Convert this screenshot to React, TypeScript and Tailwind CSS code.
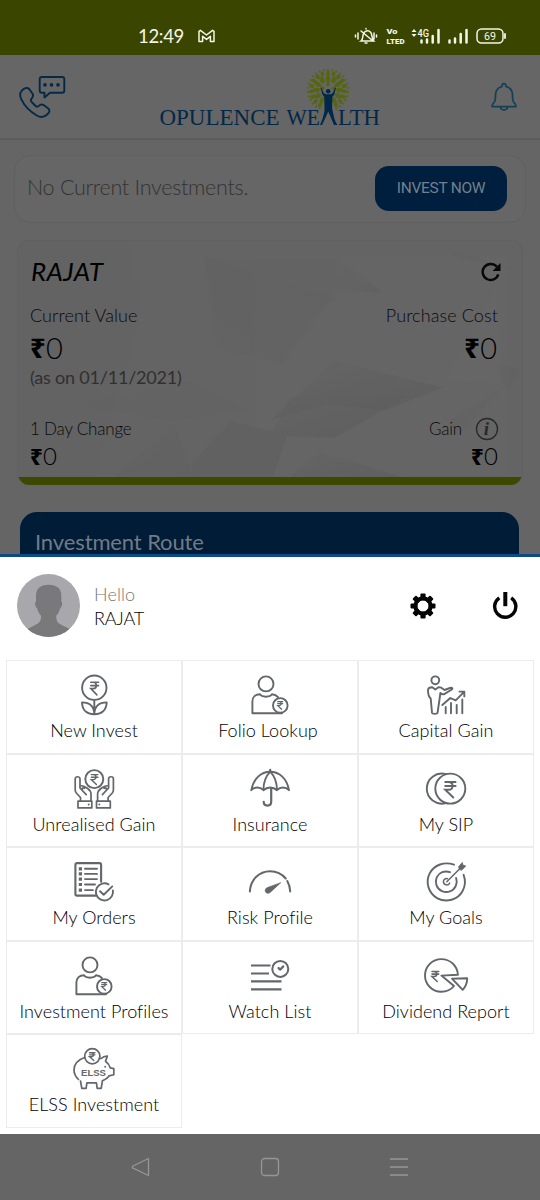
import React from "react";

const lato = "font-['Lato','Noto_Sans',sans-serif]";

function Rupee({ x, y, w, h, sw = 1.4 }: { x: number; y: number; w: number; h: number; sw?: number }) {
  return (
    <path
      d={`M${x} ${y}h${w}M${x} ${y + h * 0.26}h${w}M${x} ${y}h${w * 0.3}c${w * 0.55} 0 ${w * 0.55} ${h * 0.5} 0 ${h * 0.5}h${-w * 0.3}l${w * 0.78} ${h * 0.5}`}
      strokeWidth={sw}
      strokeLinejoin="miter"
    />
  );
}

function IconFrame({ children }: { children: React.ReactNode }) {
  return (
    <svg viewBox="0 0 48 44" className="h-11 w-12 shrink-0" fill="none" stroke="#63666a" strokeWidth="1.9" strokeLinecap="round" strokeLinejoin="round">
      {children}
    </svg>
  );
}

const flower = (
  <>
    <circle cx="24.3" cy="14.7" r="12.2" />
    <Rupee x={20.8} y={9.3} w={7.8} h={12.6} sw={1.6} />
    <path d="M24.3 27v14M24.3 41.2C16 41.2 12.2 36 12 29.4c7.6 0 12 4 12.3 11.8M24.3 41.2C32.6 41.2 36.4 36 36.7 29.4c-7.7 0-12.1 4-12.4 11.8" />
  </>
);

const person = (
  <>
    <circle cx="20" cy="10.9" r="7.5" />
    <path d="M28 40.3H6.4V28.5c0-4.5 3.2-7.2 7.6-7.3 1.5 3.3 10.5 3.3 12 0 2.6.2 4.6 1.2 6 3M27 40.3h9" />
    <circle cx="34.3" cy="32.4" r="7.3" />
    <Rupee x={31.7} y={28.7} w={5} h={7.6} sw={1.2} />
  </>
);

const growth = (
  <>
    <circle cx="13.3" cy="7.3" r="3.9" />
    <path d="M10.3 14.2c-2.3 0-4.3.6-4.3 3 0 3.5.4 6.3 2.7 8.3l1.3 14.200c.2 1.500 5.400 1.500 5.600 0L18.400 20c1.600 1.500 2.600 1.700 4.200.8l6.800-4c2-1.400.7-2.500-1.400-1.800L22.500 17l-3.200-2.200c-1-.7-2-.6-2.800-.6l-3.200 2.300z" />
    <path d="M20.3 32l8-7 5.4 2.4 8.4-8.6M37.5 18.600h4.800v4.800M23.700 34v6.300M29 30v10.300M34.700 32v8.300M40.300 26.500v13.800" />
  </>
);

const hands = (
  <>
    <circle cx="24.3" cy="12.1" r="9" />
    <Rupee x={21.3} y={7.6} w={6.6} h={10} sw={1.4} />
    <path d="M10.5 34v-3.5L6.3 26c-.8-1-1.1-1.8-1.1-3V12c0-3 4.8-3 4.8 0v9l6.2 6.7M10 18.5c5 0 11 4.5 11 8.500v7M12.500 23.300c-1.500-1.700.5-3.200 2-2M38.100 34v-3.500l4.200-4.500c.8-1 1.100-1.800 1.100-3V12c0-3-4.800-3-4.800 0v9l-6.200 6.700M38.600 18.500c-5 0-11 4.500-11 8.500v7M36.100 23.300c1.500-1.700-.5-3.200-2-2" strokeWidth="1.7" />
    <path d="M8 34.200h13.800v6.700H8zM26.500 34.200h13.800v6.700H26.500z" strokeWidth="1.7" />
    <path d="M18.700 37.500v.1M29.300 37.500v.1" />
  </>
);

const umbrella = (
  <>
    <path d="M5.3 23.2C7.5 11.5 15 4.700 24.200 4.700S41 11.500 43 23.200c-3.600-3.700-8.600-3.700-12 0-4-3.700-9.600-3.700-13.600 0-3.400-3.700-8.600-3.700-12.100 0zM24.200 4.700C20 9 17.500 16 17.400 23M24.200 4.700C28.400 9 30.900 16 31 23" />
    <path d="M24.2 2.8v1.9M25.2 21v13.8c0 5-7.5 5-7.5 0" strokeWidth="2.2" />
  </>
);

const coins = (
  <>
    <circle cx="28.3" cy="21.6" r="15" />
    <path d="M24 7.2C14 4.3 4.8 11.800 4.800 21.600S14 38.900 24 36" />
    <Rupee x={23.2} y={15} w={10.4} h={15.5} sw={1.9} />
  </>
);

const orders = (
  <>
    <path d="M26 35.600H7c-1 0-1.600-.6-1.600-1.600V4.700c0-1 .6-1.600 1.600-1.600h22.500c1 0 1.600.6 1.600 1.600v17" strokeWidth="2.1" />
    <path d="M15 8.800h12M15 13.900h12M15 19.100h12M15 24.500h10M15 30.100h8" />
    <path d="M8.800 8.800h3.200M8.800 13.900h3.200M8.800 19.100h3.200M8.800 24.500h3.200M8.800 30.100h3.200" strokeWidth="3.200" strokeLinecap="butt" />
    <path d="M38.500 24.300c-4-2.200-9.300-.6-11.600 3.500-2.300 4.200-.7 9.400 3.500 11.600s9.400.7 11.600-3.500c1-1.800 1.200-3.700.9-5.500M30 31.300l3.700 3.400 8.600-8.300" />
  </>
);

const gauge = (
  <>
    <path d="M3.900 31.500C4.300 20 13 11.200 24.200 11.200c7 0 12 3 15.500 7.300M41.300 21c1.800 3.200 2.800 6.700 2.900 10.500" strokeWidth="2" />
    <path d="M34.500 22.900L24 32.600c-1.700 1.300-4 .8-4.600-1-.6-1.900.2-3.300 2-4z" fill="#63666a" stroke="#63666a" strokeWidth=".7" />
  </>
);

const target = (
  <>
    <path d="M32 4.700C22.500 1.200 12.200 4.800 7.700 13.400c-4.600 9-1.100 20 7.700 24.900 9 4.800 20.400 1.600 25.200-7.300 2.800-5.200 3-11 1-16.200" />
    <path d="M28 12.200c-5.300-2-11 .2-13.300 5.200-2.300 5.300 0 11.400 5.300 13.700 5.300 2.400 11.500 0 13.800-5.200 1.200-2.600 1.200-5.500.3-8" />
    <path d="M25.500 18.800c-2-.8-4 .6-4.100 2.800 0 3.700 5 4.500 6.200 1.300M24.800 21.700L39 7.500" strokeWidth="1.5" />
    <path d="M37.400 9.200l-.8-2.500 3.700-4.200.7 2.700 2.800.8-4 4z" fill="#63666a" strokeWidth=".8" />
  </>
);

const list = (
  <>
    <path d="M5 11.500h19.500M5 19.500h18M5 27.300h30.500M5 35.300h30.500" strokeWidth="2.2" strokeLinecap="butt" />
    <circle cx="34.3" cy="14.9" r="8" strokeWidth="2" />
    <path d="M32.600 14.100l1.700 1.500 2.900-3.200" strokeWidth="2.3" />
  </>
);

const pie = (
  <>
    <path d="M35.900 20.700c-.5-9-7.800-15.600-16.500-15.600C10.300 5.100 3 12.400 3 21.400s7.300 16.400 16.300 16.400c5.200 0 9.700-2.100 12.700-5.800L19.400 21.600z" />
    <path d="M30 24.600l15.200-.3c0 4.700-1.500 8.400-4.500 11.500z" />
    <Rupee x={10} y={17.5} w={6.7} h={10} sw={1.6} />
  </>
);

const piggy = (
  <>
    <circle cx="22.3" cy="9.3" r="7.6" strokeWidth="1.7" />
    <Rupee x={19.5} y={5.8} w={5.5} h={7.8} sw={1.4} />
    <path d="M14.500 10.500C8 12.800 4 17.300 4 23c0 4.200 1.800 7 4.500 9.500M10.500 34l1.300 7.300h4.300l.8-5.400h9.500l.8 5.400h4l1.300-7.800c3.200-1.200 5.300-2.400 6.500-4.600l4.800-1.200v-6l-3.500-.8c-1-2.700-2.500-5-4.800-6.600l1.800-5.200c-3-.1-4.600.8-6 2.400h-2" strokeDasharray="46 1.5" strokeWidth="1.7" />
    <path d="M35.200 19.700v.1" />
    <text x="11" y="29" fontFamily="Liberation Sans, sans-serif" fontWeight="700" fontSize="9.600" textLength="25" lengthAdjust="spacingAndGlyphs" fill="#63666a" stroke="none">ELSS</text>
  </>
);

const items: { label: string; icon: React.ReactNode; nudge?: string }[] = [
  { label: "New Invest", icon: flower },
  { label: "Folio Lookup", icon: person, nudge: "pr-1" },
  { label: "Capital Gain", icon: growth },
  { label: "Unrealised Gain", icon: hands },
  { label: "Insurance", icon: umbrella },
  { label: "My SIP", icon: coins },
  { label: "My Orders", icon: orders },
  { label: "Risk Profile", icon: gauge },
  { label: "My Goals", icon: target },
  { label: "Investment Profiles", icon: person },
  { label: "Watch List", icon: list },
  { label: "Dividend Report", icon: pie },
  { label: "ELSS Investment", icon: piggy },
];

function StatusBar() {
  return (
    <div className="flex h-[55px] shrink-0 items-center bg-[#3a4500] pt-[17px] text-[#f4f6e8]">
      <span className="ml-[138px] w-[60px] text-[18.5px] leading-none tracking-[-0.3px]">12:49</span>
      <svg viewBox="0 0 17 14" className="h-3.5 w-[17px]" fill="none" stroke="#f4f6e8" strokeWidth="1.5" strokeLinejoin="round">
        <path d="M1 12.500V2.300l1.400-1L8.500 6l6.100-4.700 1.400 1v10.200h-3.600V7.300L8.500 10.400 4.600 7.300v5.200z" />
      </svg>
      <svg viewBox="354 26 154 20" className="ml-[139px] h-5 w-[154px]" fill="none" stroke="#f4f6e8" strokeWidth="1.5" strokeLinecap="round">
        <path d="M355.500 35v2M358 33v6M376.500 35v2M374 33v6M361 41c2-1.500 1.600-4 2.200-6.500.8-3.500 5-5 7.600-2 1.800 2.400.5 6 3 8.500zM361 31l12 10M366 29v-.5M365 43h2" />
        <g fill="#f4f6e8" stroke="none" fontFamily="Roboto, sans-serif">
          <text x="386.500" y="34.300" fontSize="7" fontWeight="900" textLength="11" lengthAdjust="spacingAndGlyphs">Vo</text>
          <text x="386.500" y="43.800" fontSize="7.500" fontWeight="900" textLength="18" lengthAdjust="spacingAndGlyphs">LTED</text>
          <text x="417.500" y="36.500" fontSize="10.500" fontWeight="500" textLength="11.500" lengthAdjust="spacingAndGlyphs">4G</text>
          <text x="484" y="39.800" fontSize="11" textLength="12" lengthAdjust="spacingAndGlyphs">69</text>
          <path d="M411.500 32l2.500-3 2.500 3zM411.500 34l2.500 3 2.500-3z" />
        </g>
        <path d="M421.500 40.500v2M427 39.500v3M432.700 36v6.500M438.500 30v12.500M449.500 40.500v2M455 38.500v4M460.700 34v8.500M466.500 30v12.500" strokeWidth="2.500" />
        <rect x="477" y="29" width="26" height="14" rx="4.500" strokeWidth="1.500" />
        <path d="M505 34v4" strokeWidth="1.800" />
      </svg>
    </div>
  );
}

const leaves = [
  { r: 20.3, n: 30, rx: 0.9, ry: 1.2, gap: 24 },
  { r: 16.8, n: 19, rx: 1.9, ry: 2.6, gap: 20 },
  { r: 11.6, n: 12, rx: 2.3, ry: 3.5, gap: 28 },
  { r: 6, n: 5, rx: 1.7, ry: 2.3, gap: 80 },
];

function Logo() {
  return (
    <svg viewBox="158 66 224 64" className="h-16 w-56">
      <g fill="#566510">
        {leaves.map((ring) =>
          Array.from({ length: ring.n }, (_, i) => {
            const a = (i * 360) / ring.n;
            if (Math.abs(a - 180) < ring.gap) return null;
            return <ellipse key={`${ring.r}-${i}`} cx="328" cy={90 - ring.r} rx={ring.rx} ry={ring.ry} transform={`rotate(${a} 328 90)`} />;
          })
        )}
      </g>
      <g fill="#022849">
        <circle cx="328.2" cy="91.3" r="2.3" />
        <path d="M321.200 87.500l2.400 5.200c1 1.200 2 1.600 4.600 1.600s3.600-.4 4.600-1.600l2.400-5.200.7.500-1.600 6.500-2 2.500-.2 11.500 2.200 10c1.300 3.500 2 5 3.200 6.500h-3.500c-2.200-5.500-4-9.500-5.800-13.500-1.700 4-3.600 8-6.200 13.500h-2c2-4 3.500-9 4.500-14l-.2-14-1.900-2.500-1.800-6.500z" />
        <g fontFamily="Liberation Serif, serif" fontSize="23.500">
          <text x="159.500" y="125.300" textLength="120" lengthAdjust="spacingAndGlyphs">OPULENCE</text>
          <text x="286.500" y="125.300" textLength="33.500" lengthAdjust="spacingAndGlyphs">WE</text>
          <text x="338" y="125.300" textLength="42" lengthAdjust="spacingAndGlyphs">LTH</text>
        </g>
      </g>
    </svg>
  );
}

function Header() {
  return (
    <header className="flex h-[85px] shrink-0 items-start border-b-2 border-[#5c5c5c] bg-[#666]">
      <svg viewBox="18 74 50 46" className="ml-[18px] mt-[19px] h-[46px] w-[50px]" fill="none" stroke="#052a48" strokeWidth="1.9" strokeLinejoin="round">
        <path d="M42 77h20c1.500 0 2.300.8 2.300 2.300v11.200c0 1.500-.8 2.300-2.300 2.300h-12l-5.500 4.700v-4.700H42c-1.500 0-2.300-.8-2.300-2.300V79.300c0-1.500.8-2.300 2.300-2.300z" />
        <path d="M45 84.800v.1M51.500 84.800v.1M58 84.800v.1" strokeWidth="3.600" strokeLinecap="round" />
        <path d="M21.500 91c2.500-2.800 5.500-4 7.700-2l3.200 4.500c1.500 2.300.5 3.800-1 5.300-.8 1-.7 2 .2 3.200l4 4c1.200 1 2.200.8 3.200-.1 1.500-1.500 3-2 5.200-.6l4 3c2.300 1.900 1.700 3.600-.4 5.700-3.200 3.600-6.500 3.900-10.800 1.500C30 111.500 24.500 106 21.500 99.700c-1.800-3.500-2-6.200 0-8.700z" />
      </svg>
      <div className="ml-[90px] mt-[11px]"><Logo /></div>
      <svg viewBox="490 81 28 32" className="ml-[108px] mt-[26px] h-8 w-7" fill="none" stroke="#133f57" strokeWidth="1.7" strokeLinejoin="round">
        <path d="M502 86.500c0-3.800 4-3.800 4 0 4.200 1.200 6.500 4 6.500 8.500 0 5 .3 6.500 1.500 7.600 1.600 1.200 2 2.100 2 4h-24c0-1.900.4-2.800 2-4 1.200-1.100 1.500-2.600 1.500-7.600 0-4.500 2.300-7.300 6.500-8.500zM500.500 107c.4 4 6.600 4 7 0" />
      </svg>
    </header>
  );
}

function Facets() {
  return (
    <svg viewBox="18 240 504 238" preserveAspectRatio="none" className="absolute inset-0 h-full w-full opacity-60">
      <defs>
        <linearGradient id="fa" x1="0" x2="1" y1="0" y2="1">
          <stop offset="0" stopColor="#5c5c5c" stopOpacity=".1" />
          <stop offset="1" stopColor="#575757" stopOpacity=".8" />
        </linearGradient>
        <linearGradient id="fb" x1="1" x2="0" y1="0" y2="1">
          <stop offset="0" stopColor="#5c5c5c" stopOpacity=".5" />
          <stop offset="1" stopColor="#646464" stopOpacity=".1" />
        </linearGradient>
      </defs>
      <path d="M18 240h108l17 65-50 173H18z" fill="#626262" fillOpacity=".5" />
      <path d="M205 255l60 20 72 20-60 50-55 10z" fill="url(#fb)" />
      <path d="M203 256l134 0 0 32-55 72-65-15z" fill="#606060" fillOpacity=".3" />
      <path d="M338 256l45 35-46-3z" fill="url(#fa)" opacity=".5" />
      <path d="M334 357l109 26-58 22-60-5-55 15z" fill="url(#fa)" />
      <path d="M410 390l-75 42-65-2 20-38z" fill="url(#fa)" />
      <path d="M80 400l110-24 60 28-80 12z" fill="#616161" fillOpacity=".5" />
      <path d="M191 458l40-42 56 14-17 48h-75z" fill="#5d5d5d" fillOpacity=".7" />
      <path d="M104 478l70-62 22 62z" fill="url(#fa)" opacity=".5" />
      <path d="M320 446l110 32h-150z" fill="url(#fa)" />
      <path d="M454 250l68 20-70-15zM522 365l-15 20-14-25zM450 415l50-30-42 45z" fill="#606060" fillOpacity=".6" />
      <path d="M446 375l50-90 5 95z" fill="#696969" fillOpacity=".5" />
    </svg>
  );
}

function Amount({ large = false }: { large?: boolean }) {
  return (
    <span className="flex items-center">
      <span className={large ? "w-4 font-['Noto_Sans'] text-[27px] font-extrabold" : "w-[13px] font-['Noto_Sans'] text-[22px] font-extrabold"}>₹</span>
      <span className="font-light">0</span>
    </span>
  );
}

function Portfolio() {
  return (
    <section className="relative ml-[17px] mt-[17px] h-[245px] w-[506px] shrink-0 overflow-hidden rounded-xl border-x border-t border-[#606060] border-b-0 bg-[#656565]">
      <Facets />
      <div className="relative flex h-[236px] flex-col pl-3 pr-[24px]">
        <div className="flex h-[60px] items-center justify-between">
          <span className="pb-px pl-px text-[26px] italic leading-none tracking-[0.3px] text-black">RAJAT</span>
          <svg viewBox="0 0 20 20" className="mr-[-3px] mt-[2px] h-5 w-5" fill="none" stroke="#080808" strokeWidth="2.4">
            <path d="M17.300 12.300A8 8 0 1 1 15.800 4.800" />
            <path d="M19.500 1v8h-8z" fill="#080808" stroke="none" />
          </svg>
        </div>
        <div className="mt-px flex h-[26px] items-center justify-between text-[18px] font-light tracking-[0.1px] text-[#0a0a0a]">
          <span>Current Value</span><span>Purchase Cost</span>
        </div>
        <div className="flex h-[38px] items-center justify-between pr-px text-[29px] leading-none text-black">
          <Amount large /><Amount large />
        </div>
        <div className="mt-px text-[18px] leading-[20px] tracking-[-0.2px] text-[#303030]">(as on 01/11/2021)</div>
        <div className="mt-[29px] flex h-[26px] items-center justify-between text-[17px] font-light tracking-[-0.2px] text-[#0a0a0a]">
          <span>1 Day Change</span>
          <span className="flex items-center gap-[13px]">Gain
            <svg viewBox="0 0 24 24" className="mr-[-1px] h-6 w-6">
              <circle cx="12" cy="12" r="10.5" fill="none" stroke="#292929" strokeWidth="1.3" />
              <text x="8.700" y="18.200" fontFamily="Liberation Serif, serif" fontStyle="italic" fontWeight="700" fontSize="19" fill="#292929">i</text>
            </svg>
          </span>
        </div>
        <div className="flex h-[28px] items-center justify-between text-[24px] leading-none text-black"><Amount /><Amount /></div>
      </div>
      <div className="relative h-2 bg-[#3d4900]" />
    </section>
  );
}

function Sheet() {
  return (
    <section className="flex h-[580px] shrink-0 flex-col border-t-[3px] border-[#0c498c] bg-white">
      <div className="flex h-[103px] shrink-0 items-start">
        <svg viewBox="0 0 64 64" className="ml-[17px] mt-[17px] h-[63px] w-[63px]">
          <defs><clipPath id="av"><circle cx="32" cy="32" r="32" /></clipPath></defs>
          <g clipPath="url(#av)">
            <path d="M0 0h64v64H0z" fill="#a8a7ac" />
            <path d="M32 11c8.500 0 13.500 4 13 12v5c1.700 1 .8 5.500-1.200 7-1 3.500-2.300 5.500-4 7.500 0 6 2 8 7 10l10 5 4 6.500H3l5-6.500 9-5c5-2 7.500-4 7.500-10-1.700-2-3-4-4-7.500-2-1.500-3-6-1.200-7v-5c-.3-8 4.200-12 12.700-12z" fill="#79797b" />
          </g>
        </svg>
        <div className="ml-[14px] mt-[25px] w-[300px] text-[18px] font-light leading-6">
          <div className="tracking-[0.1px] text-[#777]">Hello</div>
          <div className="tracking-[-0.2px] text-black">RAJAT</div>
        </div>
        <svg viewBox="0 0 26 26" className="ml-[16px] mt-[36px] h-[26px] w-[26px]">
          <g fill="#050505">
            {[0, 45, 90, 135, 180, 225, 270, 315].map((a) => <rect key={a} x="10.400" y=".5" width="5.200" height="7" rx="1" transform={`rotate(${a} 13 13)`} />)}
          </g>
          <circle cx="13" cy="13" r="7.7" fill="none" stroke="#050505" strokeWidth="4" />
        </svg>
        <svg viewBox="0 0 26 28" className="ml-[56px] mt-[35px] h-7 w-[26px]" fill="none" stroke="#050505" strokeWidth="3.4">
          <path d="M7.300 5.900a10.600 10.600 0 1 0 11.900 0" />
          <path d="M13.300 0v14.200" strokeWidth="4" />
        </svg>
      </div>
      <div className="ml-1.5 grid w-[528px] shrink-0 grid-cols-3 auto-rows-[93.6px]">
        {items.map(({ label, icon, nudge }) => (
          <div key={label} className="flex flex-col items-center border border-[#ececec] pt-3">
            <IconFrame>{icon}</IconFrame>
            <span className={`whitespace-nowrap text-[18px] font-light leading-[26px] tracking-[0.05px] text-black ${nudge ?? ""}`}>{label}</span>
          </div>
        ))}
      </div>
    </section>
  );
}

export default function App() {
  return (
    <main className={`flex h-[1200px] w-[540px] flex-col overflow-hidden bg-[#656565] ${lato}`}>
      <div className="flex h-[554px] shrink-0 flex-col overflow-hidden">
        <StatusBar />
        <Header />
        <section className="ml-[14px] mt-[15px] flex h-[68px] w-[512px] shrink-0 items-center justify-between rounded-2xl border border-[#606060] bg-[#666] pl-3 pr-[18px]">
          <span className="pb-1 text-[21.5px] font-light tracking-[-0.28px] text-[#333]">No Current Investments.</span>
          <button className="mb-0.5 h-[45px] w-[132px] rounded-[14px] bg-[#001e3d] pt-0.5 font-['Roboto'] text-[15.5px] tracking-[-0.3px] text-[#73808c]">INVEST NOW</button>
        </section>
        <Portfolio />
        <section className="ml-5 mt-[27px] h-[60px] w-[499px] shrink-0 rounded-t-[17px] bg-[#001c37] pl-[15px] pt-[15px] text-[22px] leading-[30px] tracking-[-0.12px] text-[#717b83]">Investment Route</section>
      </div>
      <Sheet />
      <nav className="flex h-[66px] shrink-0 items-center bg-[#656565]">
        <svg viewBox="0 0 20 20" className="ml-[131px] h-5 w-5" fill="none" stroke="#969696" strokeWidth="1.3" strokeLinejoin="round"><path d="M17.500 1.500v17L2 11.200c-1-.6-1-1.600 0-2.200z" /></svg>
        <svg viewBox="0 0 20 20" className="ml-[109px] h-5 w-5" fill="none" stroke="#969696" strokeWidth="1.3"><rect x="1.500" y="1.500" width="17" height="17" rx="3" /></svg>
        <svg viewBox="0 0 20 20" className="ml-[109px] h-5 w-5" fill="none" stroke="#969696" strokeWidth="1.3"><path d="M1 2h18M1 10h18M1 18h18" /></svg>
      </nav>
    </main>
  );
}
